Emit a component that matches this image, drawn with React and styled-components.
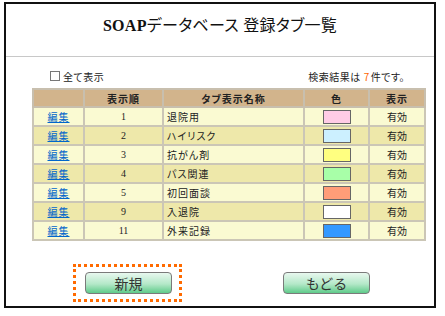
// SOAP database tab list screen
import styled, { createGlobalStyle } from 'styled-components'

const GlobalStyle = createGlobalStyle`
  body {
    margin: 0;
    background: #fff;
    font-family: 'Liberation Serif', 'Noto Sans CJK JP', serif;
    color: #222;
  }
`

const Frame = styled.div`
  box-sizing: border-box;
  width: 432px;
  height: 306px;
  margin: 2px 0 0 4px;
  border: 2px solid #111;
  display: flex;
  flex-direction: column;
`

const Header = styled.div`
  height: 53px;
  display: flex;
  justify-content: center;
  align-items: flex-start;
  padding-top: 11px;
  box-sizing: border-box;
  border-bottom: 1px solid #c8c8c8;
`

const Title = styled.h1`
  margin: 0;
  font-size: 16px;
  line-height: 22px;
  font-weight: normal;
  font-feature-settings: 'palt';
  letter-spacing: 0.3px;
  color: #111;
`

const Latin = styled.span`
  font-weight: bold;
`

const Toolbar = styled.div`
  display: flex;
  justify-content: space-between;
  align-items: center;
  height: 10px;
  margin: 14px 29px 0 44px;
  font-size: 10px;
  font-family: 'Noto Sans CJK JP', sans-serif;
  font-feature-settings: 'palt';
`

const CheckLabel = styled.label`
  display: flex;
  align-items: center;
  gap: 3px;
  letter-spacing: 0.5px;
`

const CheckBox = styled.input.attrs({ type: 'checkbox' })`
  appearance: none;
  margin: 0;
  width: 10px;
  height: 10px;
  box-sizing: border-box;
  border: 1px solid #777;
  background: #fff;
`

const Count = styled.span`
  letter-spacing: 0.5px;
`

const Num = styled.span`
  color: #ff6600;
  margin: 0 1px 0 3px;
`

const Table = styled.table`
  margin: 7px 0 0 26px;
  width: 392px;
  border-collapse: collapse;
  table-layout: fixed;
  font-size: 10px;
  font-feature-settings: 'palt';
  border: 2px solid #eadfc6;
`

const Th = styled.th`
  background: #d2b48c;
  height: 16px;
  padding: 0;
  font-weight: bold;
  border: 2px solid #c8bfae;
  letter-spacing: 1px;
  color: #222;
`

const Row = styled.tr`
  background: ${p => (p.$odd ? '#eee8aa' : '#fafad2')};
`

const Td = styled.td`
  height: 17px;
  padding: 0 ${p => (p.$left ? '3px' : '0')};
  text-align: ${p => (p.$left ? 'left' : 'center')};
  border: 2px solid #cbc6b6;
  letter-spacing: ${p => (p.$left ? '1px' : '0')};
  white-space: nowrap;
`

const EditLink = styled.a`
  color: #0066cc;
  text-decoration: underline;
  letter-spacing: 1px;
`

const Swatch = styled.span`
  display: inline-block;
  vertical-align: middle;
  width: 28px;
  height: 14px;
  box-sizing: border-box;
  border: 1px solid #666;
  background: ${p => p.$color};
`

const Buttons = styled.div`
  display: flex;
  align-items: center;
  gap: 101px;
  margin: 23px 0 0 67px;
`

const Focus = styled.div`
  border: 3px dotted #ff6a00;
  padding: 5px 7px 5px 9px;
`

const Button = styled.button`
  width: 87px;
  height: 22px;
  box-sizing: border-box;
  border: 1px solid #7a7a7a;
  border-radius: 4px;
  background: linear-gradient(#e8f8ef, #b4e8c8 55%, #5fcb8a);
  font-family: 'Noto Sans CJK JP', sans-serif;
  font-size: 14px;
  line-height: 18px;
  color: #333;
  padding: 0;
`

const tabs = [
  { order: 1, name: '退院用', color: '#ffcce6' },
  { order: 2, name: 'ハイリスク', color: '#ccf0ff' },
  { order: 3, name: '抗がん剤', color: '#ffff80' },
  { order: 4, name: 'パス関連', color: '#a8ffa8' },
  { order: 5, name: '初回面談', color: '#ff9d78' },
  { order: 9, name: '入退院', color: '#ffffff' },
  { order: 11, name: '外来記録', color: '#3399ff' },
]

export default function App() {
  return (
    <>
      <GlobalStyle />
      <Frame>
        <Header>
          <Title>
            <Latin>SOAP</Latin>データベース 登録タブ一覧
          </Title>
        </Header>
        <Toolbar>
          <CheckLabel>
            <CheckBox />
            全て表示
          </CheckLabel>
          <Count>
            検索結果は<Num>7</Num>件です。
          </Count>
        </Toolbar>
        <Table>
          <colgroup>
            <col style={{ width: 51 }} />
            <col style={{ width: 79 }} />
            <col style={{ width: 141 }} />
            <col style={{ width: 65 }} />
            <col style={{ width: 56 }} />
          </colgroup>
          <thead>
            <tr>
              <Th></Th>
              <Th>表示順</Th>
              <Th>タブ表示名称</Th>
              <Th>色</Th>
              <Th>表示</Th>
            </tr>
          </thead>
          <tbody>
            {tabs.map((t, i) => (
              <Row key={t.order} $odd={i % 2 === 1}>
                <Td>
                  <EditLink href="#">編集</EditLink>
                </Td>
                <Td>{t.order}</Td>
                <Td $left>{t.name}</Td>
                <Td>
                  <Swatch $color={t.color} />
                </Td>
                <Td>有効</Td>
              </Row>
            ))}
          </tbody>
        </Table>
        <Buttons>
          <Focus>
            <Button>新規</Button>
          </Focus>
          <Button>もどる</Button>
        </Buttons>
      </Frame>
    </>
  )
}
